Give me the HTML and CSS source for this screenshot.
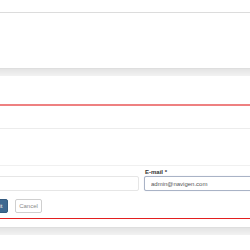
FILE: index.html
```html
<!DOCTYPE html>
<html lang="en">
<head>
    <meta charset="UTF-8">
    <meta name="viewport" content="width=device-width, initial-scale=1.0">
    <title>Users - Edit</title>
    <link rel="stylesheet" href="styles.css">
</head>
<body>
    <div class="panel panel-top"></div>
    <div class="panel panel-first"></div>
    <div class="band"></div>

    <div class="panel panel-second">
        <div class="section">
            <div class="row row-empty"></div>
            <div class="row row-empty tall"></div>
            <div class="row row-fields">
                <div class="field">
                    <label>&nbsp;</label>
                    <input type="text">
                </div>
                <div class="field">
                    <label for="email">E-mail *</label>
                    <input type="email" id="email" class="focused" value="admin@navigen.com">
                </div>
            </div>
            <div class="actions">
                <button class="submit-btn">Submit</button>
                <button class="cancel-btn">Cancel</button>
            </div>
        </div>
        <div class="spacer"></div>
    </div>
    <div class="band"></div>
    <div class="panel panel-bottom"></div>
</body>
</html>
```

FILE: styles.css
```css
body {
    font-family: "Liberation Sans", Arial, sans-serif;
    background-color: white;
    color: #333;
    margin: 0;
    overflow: hidden;
}
.panel {
    background-color: white;
}
.panel-top {
    height: 12px;
    border-bottom: 1px solid #dcdcdc;
}
.panel-first {
    height: 55px;
}
.band {
    height: 8px;
    background: linear-gradient(#e4e4e4, #f2f2f2);
    border-top: 1px solid #dedede;
    box-sizing: border-box;
}
.panel-second {
    padding-top: 28px;
}
.section {
    border-top: 2px solid #ee8081;
    border-bottom: 1px solid #e31f1f;
    padding-bottom: 5px;
}
.row-empty {
    height: 22px;
    border-bottom: 1px solid #ececec;
}
.row-empty.tall {
    height: 36px;
    border-bottom: 1px solid #f0f0f0;
}
.row-fields {
    display: grid;
    grid-template-columns: 149px 130px;
    column-gap: 5px;
    margin-left: -10px;
    padding-top: 3px;
}
.field label {
    display: block;
    font-size: 6px;
    font-weight: bold;
    color: #333;
    height: 7px;
    line-height: 7px;
    padding-left: 1px;
}
.field input {
    display: block;
    width: 100%;
    height: 15px;
    box-sizing: border-box;
    border: 1px solid #e6e6e6;
    border-radius: 2px;
    font-family: "Liberation Sans", Arial, sans-serif;
    font-size: 6px;
    color: #555;
    padding: 0 6px;
}
.field input.focused {
    border-color: #a9b3c6;
    box-shadow: 0 0 1px #c7cedb;
}
.actions {
    display: flex;
    gap: 7px;
    margin-left: -22px;
    margin-top: 8px;
}
.actions button {
    height: 14px;
    font-family: "Liberation Sans", Arial, sans-serif;
    font-size: 6px;
    border-radius: 2px;
    padding: 0;
}
.submit-btn {
    width: 30px;
    background-color: #3e6890;
    border: 1px solid #355c80;
    color: white;
}
.cancel-btn {
    width: 27px;
    background-color: white;
    border: 1px solid #cfcfcf;
    color: #8a8a8a;
}
.spacer {
    height: 8px;
}
.panel-bottom {
    height: 20px;
}
```
